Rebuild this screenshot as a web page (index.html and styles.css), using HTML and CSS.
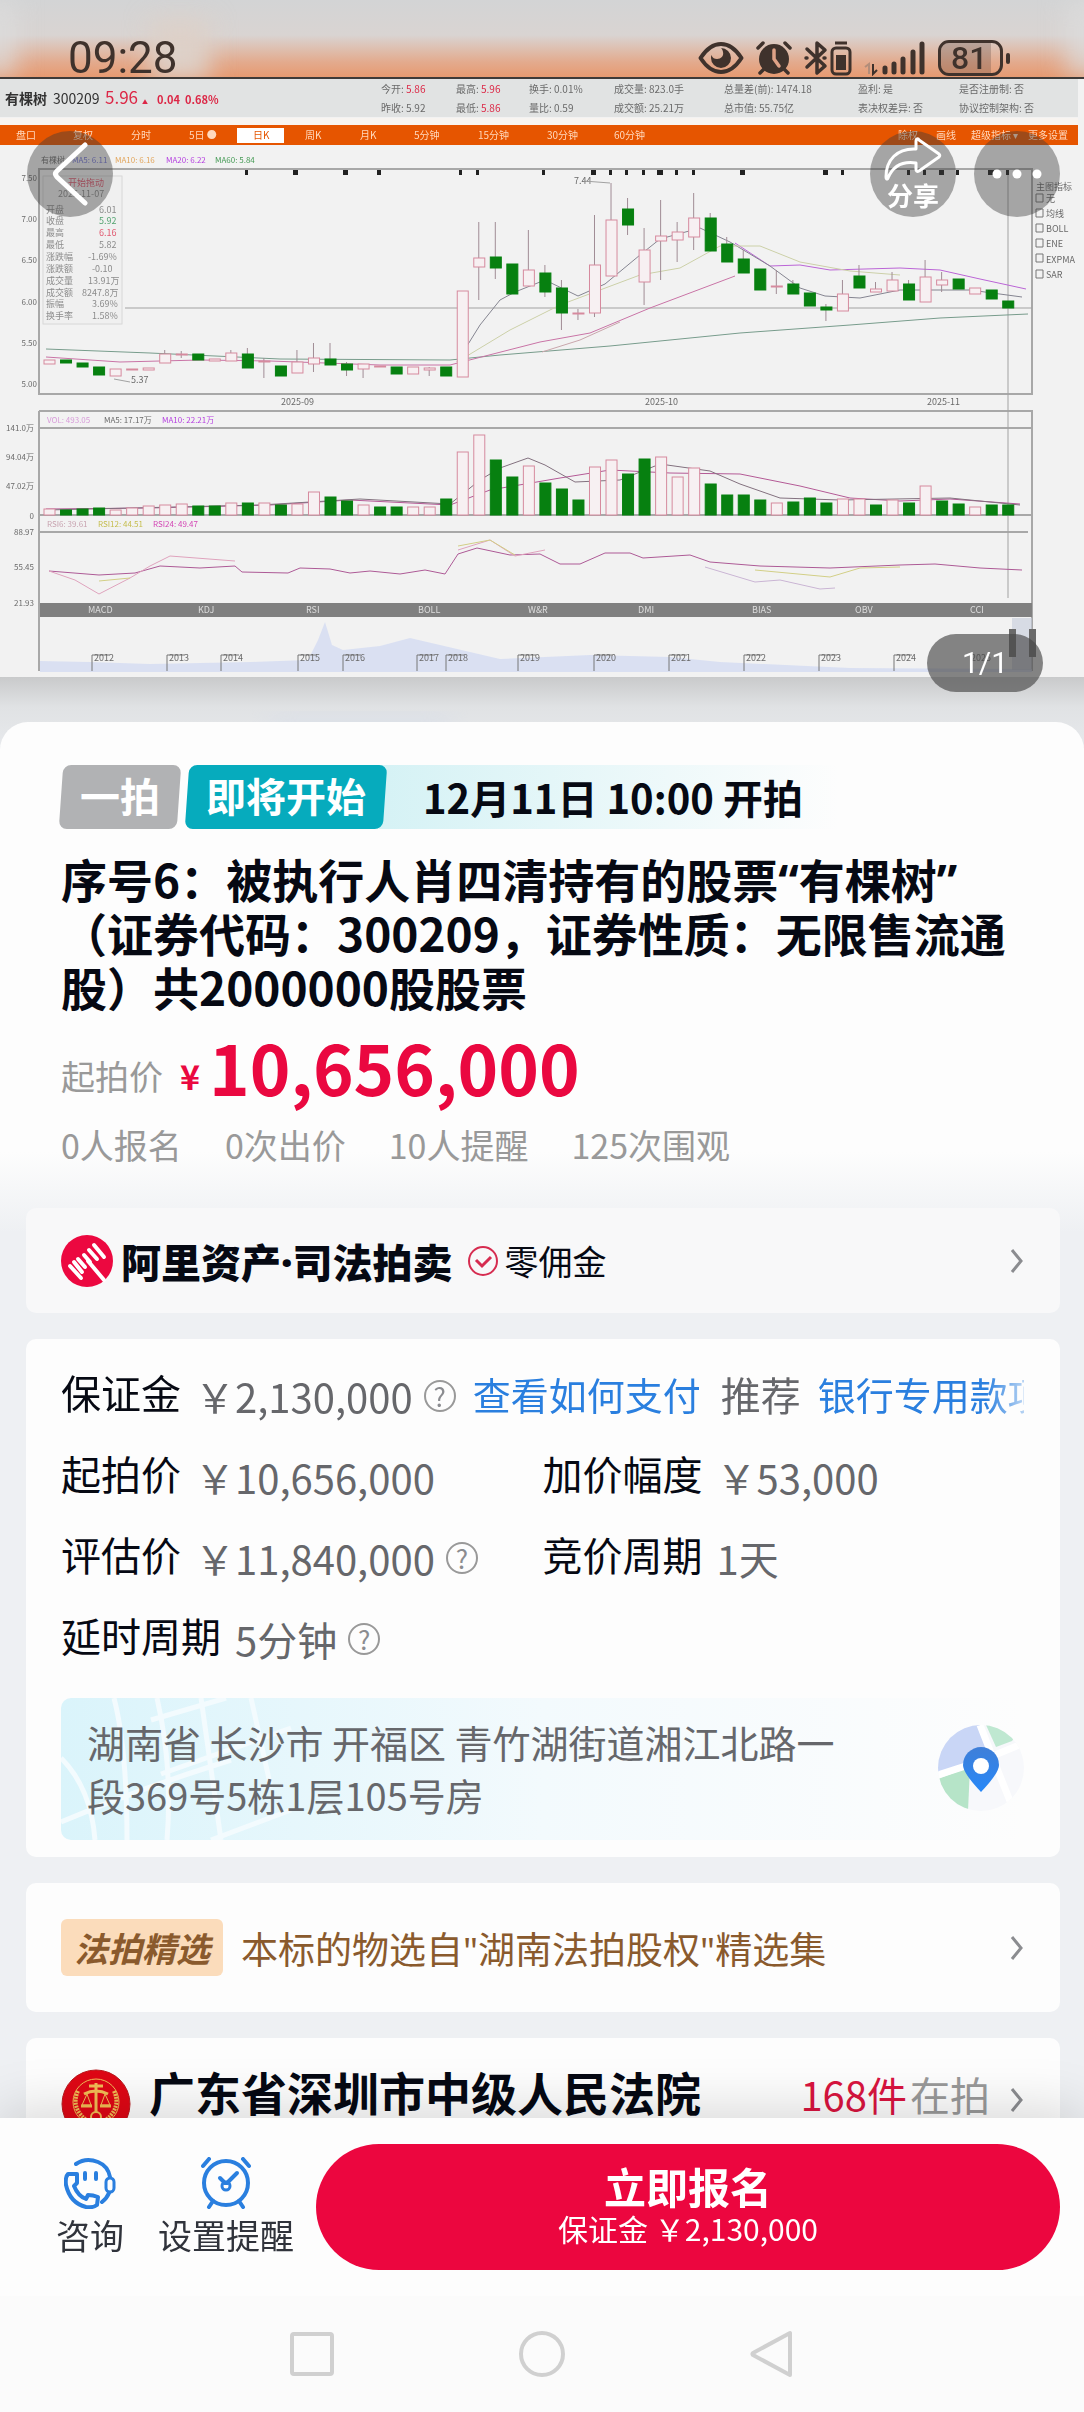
FILE: index.html
```html
<!DOCTYPE html>
<html lang="zh-CN">
<head>
    <meta charset="UTF-8">
    <meta name="viewport" content="width=device-width, initial-scale=1">
    <title>阿里资产·司法拍卖</title>
    <link rel="stylesheet" href="styles.css">
</head>
<body>

<main class="content">
    <section class="hero">
        <svg class="chart" viewBox="0 0 1084 752" role="img" aria-label="有棵树 300209">
            <defs>
                <linearGradient id="skyTop" x1="0" y1="0" x2="0" y2="1">
                    <stop offset="0" stop-color="#d3d4d5"/>
                    <stop offset="0.45" stop-color="#d9d4d2"/>
                    <stop offset="0.8" stop-color="#e3aa8d"/>
                    <stop offset="1" stop-color="#e7996f"/>
                </linearGradient>
                <linearGradient id="skyBottom" x1="0" y1="0" x2="0" y2="1">
                    <stop offset="0" stop-color="#c9cacb"/>
                    <stop offset="0.4" stop-color="#e0e2e4"/>
                    <stop offset="1" stop-color="#e8eaed"/>
                </linearGradient>
                <filter id="soft"><feGaussianBlur stdDeviation="0.7"/></filter>
                <filter id="haze"><feGaussianBlur stdDeviation="12"/></filter>
            </defs>
            <rect width="1084" height="78" fill="url(#skyTop)"/>
            <g filter="url(#haze)">
                <rect x="150" y="20" width="60" height="60" fill="#ddd0c8"/>
                <rect x="-20" y="0" width="36" height="76" fill="#dcdcdc" opacity="0.8"/>
                <rect x="1066" y="0" width="40" height="76" fill="#dcdcdc" opacity="0.8"/>
            </g>
            <rect y="677" width="1084" height="75" fill="url(#skyBottom)"/>
            <rect x="270" y="715" width="180" height="40" fill="#d5dbe8" opacity="0.5" filter="url(#haze)"/>

            <rect y="78" width="1084" height="599" fill="#f2f2f2"/>
            <rect y="79" width="1078" height="38" fill="#e1e3e3"/>
            <rect y="77" width="1084" height="2" fill="#3e3a38"/>
            <rect y="118" width="1078" height="7" fill="#f8f4f0"/>
            <rect y="125" width="1078" height="20" fill="#e65500"/>
            <rect x="237" y="128" width="47" height="15" fill="#fff"/>

            <g class="chart-text" filter="url(#soft)">
                <g class="quote-head">
                    <text x="5" y="104" class="bold">有棵树</text>
                    <text x="53" y="104">300209</text>
                    <text x="105" y="104" class="last up">5.96</text>
                    <text x="142" y="104" class="up tiny">▲</text>
                    <text x="157" y="104" class="change up">0.04</text>
                    <text x="185" y="104" class="change up">0.68%</text>
                </g>
                <text x="381" y="93">今开: <tspan class="up">5.86</tspan></text>
                <text x="381" y="112">昨收: 5.92</text>
                <text x="456" y="93">最高: <tspan class="up">5.96</tspan></text>
                <text x="456" y="112">最低: <tspan class="up">5.86</tspan></text>
                <text x="529" y="93">换手: 0.01%</text>
                <text x="529" y="112">量比: 0.59</text>
                <text x="614" y="93">成交量: 823.0手</text>
                <text x="614" y="112">成交额: 25.21万</text>
                <text x="724" y="93">总量差(前): 1474.18</text>
                <text x="724" y="112">总市值: 55.75亿</text>
                <text x="858" y="93">盈利: 是</text>
                <text x="858" y="112">表决权差异: 否</text>
                <text x="959" y="93">是否注册制: 否</text>
                <text x="959" y="112">协议控制架构: 否</text>

                <g class="tabs">
                    <text x="16" y="139">盘口</text>
                    <text x="73" y="139">复权</text>
                    <text x="131" y="139">分时</text>
                    <text x="189" y="139">5日 ●</text>
                    <text x="253" y="139" class="orange">日K</text>
                    <text x="305" y="139">周K</text>
                    <text x="360" y="139">月K</text>
                    <text x="414" y="139">5分钟</text>
                    <text x="478" y="139">15分钟</text>
                    <text x="547" y="139">30分钟</text>
                    <text x="614" y="139">60分钟</text>
                    <text x="898" y="139">除权</text>
                    <text x="936" y="139">画线</text>
                    <text x="971" y="139">超级指标 ▾</text>
                    <text x="1028" y="139">更多设置</text>
                </g>

                <g class="legend">
                    <text x="41" y="163">有棵树</text>
                    <text x="72" y="163" fill="#7779d8">MA5: 6.11</text>
                    <text x="115" y="163" fill="#e2a55c">MA10: 6.16</text>
                    <text x="166" y="163" fill="#b53fe0">MA20: 6.22</text>
                    <text x="215" y="163" fill="#459a55">MA60: 5.84</text>
                    <text x="47" y="423" fill="#d79bd9">VOL: 493.05</text>
                    <text x="104" y="423">MA5: 17.17万</text>
                    <text x="162" y="423" fill="#b53fe0">MA10: 22.21万</text>
                    <text x="47" y="527" fill="#c8a3b0">RSI6: 39.61</text>
                    <text x="98" y="527" fill="#c5bd4c">RSI12: 44.51</text>
                    <text x="153" y="527" fill="#d346b5">RSI24: 49.47</text>
                </g>

                <g class="axis">
                    <text x="37" y="181">7.50</text>
                    <text x="37" y="222">7.00</text>
                    <text x="37" y="263">6.50</text>
                    <text x="37" y="305">6.00</text>
                    <text x="37" y="346">5.50</text>
                    <text x="37" y="387">5.00</text>
                    <text x="34" y="431">141.0万</text>
                    <text x="34" y="460">94.04万</text>
                    <text x="34" y="489">47.02万</text>
                    <text x="34" y="519">0</text>
                    <text x="34" y="535">88.97</text>
                    <text x="34" y="570">55.45</text>
                    <text x="34" y="606">21.93</text>
                </g>
                <text x="574" y="184" class="small">7.44</text>
                <text x="131" y="383" class="small">5.37</text>
                <text x="281" y="405" class="small">2025-09</text>
                <text x="645" y="405" class="small">2025-10</text>
                <text x="927" y="405" class="small">2025-11</text>
            </g>

            <g class="frame">
                <path d="M39 169H1032V394H39Z"/>
                <path d="M39 411H1032V671M39 411V671M39 428H1032M39 515H1032M39 532H1028"/>
                <path d="M125 308H1032" class="thin"/>
                <path d="M1008 170V598" class="thin"/>
                <path d="M584 181L610 183" class="thin"/>
                <path d="M114 379L130 382" class="thin"/>
            </g>
            <path class="marks" d="M245 170h3v5h-3zM293 170h5v5h-5zM343 170h5v5h-5zM377 170h4v5h-4zM459 170h3v5h-3zM476 170h3v5h-3zM542 170h3v5h-3zM591 170h5v5h-5zM609 170h3v5h-3zM625 170h3v5h-3zM642 170h3v5h-3zM657 170h6v5h-6zM675 170h3v5h-3zM692 170h3v5h-3zM740 170h5v5h-5zM823 170h5v5h-5zM841 170h3v5h-3zM907 170h3v5h-3zM923 170h3v5h-3zM939 170h5v5h-5zM956 170h3v5h-3zM988 170h6v5h-6zM1006 170h3v5h-3z"/>

            <!-- moving averages -->
            <g class="lines" filter="url(#soft)">
                <path stroke="#789c8c" d="M46 349L150 353L280 359L450 360L500 355L610 346L740 333L850 325L940 318L1028 314"/>
                <path stroke="#c974a6" d="M46 357L120 362L200 360L270 361L380 365L450 365L540 342L590 333L650 308L735 276"/>
                <path stroke="#bb65d6" d="M735 243L770 266L800 265L830 270L900 268L940 270L980 279L1026 289"/>
                <path stroke="#858591" d="M457 362L480 325L500 300L515 292L545 280L578 296L605 284L640 255L660 239L700 228L730 242L770 266L800 288L825 296L860 298L900 290L970 290L1022 297"/>
                <path stroke="#ccd0a8" d="M457 362L510 330L560 305L600 290L640 275L680 268L720 246L760 246L800 262L850 271L900 275"/>
                <path stroke="#c9a6ac" d="M542 352L580 340L620 322"/>
                <path stroke="#b45a96" d="M46 509L150 508L270 505L350 500L450 505L490 490L560 478L610 470L670 473L740 474L800 486L850 498L900 501L950 499L1020 504"/>
                <path stroke="#83717f" d="M46 510L260 505L360 499L450 504L480 480L500 468L528 458L545 465L575 482L620 480L660 464L710 471L740 484L780 498L840 500L950 498L1020 505"/>
                <path stroke="#ad5a96" d="M49 571L99 575L135 573L160 566L200 568L235 566L242 572L288 573L300 568L330 569L350 573L370 571L400 574L425 570L445 574L458 554L477 548L510 555L540 554L560 564L580 564L605 553L630 553L643 558L690 555L710 562L760 566L830 568L900 565L935 564L980 568L1022 570"/>
                <path stroke="#dfa3bd" d="M49 571L75 580L99 594L130 578L150 566L170 556L235 561M458 550L490 540L515 556L545 550"/>
                <path stroke="#d2cf86" d="M99 581L130 578M458 546L490 540L515 555M755 570L830 577L860 568L900 567"/>
                <path stroke="#cab5d4" d="M705 567L755 582L780 580L820 589L835 588"/>
            </g>
            <g id="candles"></g>
            <g id="volumes"></g>

            <rect x="40" y="603" width="992" height="14" fill="#808080"/>
            <g filter="url(#soft)">
                <path d="M40 672V661L90 662L150 664L250 662L308 660L318 640L325 622L332 645L343 650L380 646L410 638L440 645L470 652L500 659L590 655L670 657L720 662L850 668L1032 669V672Z" fill="#d4dcf3" opacity="0.8"/>
                <path d="M92 671V655H110M167 671V655H185M221 671V655H239M298 671V655H316M343 671V655H361M417 671V655H435M446 671V655H464M518 671V655H536M594 671V655H612M669 671V655H687M744 671V655H762M819 671V655H837M894 671V655H912" class="flags"/>
                <g class="chart-text small">
                    <text x="94" y="661">2012</text>
                    <text x="169" y="661">2013</text>
                    <text x="223" y="661">2014</text>
                    <text x="300" y="661">2015</text>
                    <text x="345" y="661">2016</text>
                    <text x="419" y="661">2017</text>
                    <text x="448" y="661">2018</text>
                    <text x="520" y="661">2019</text>
                    <text x="596" y="661">2020</text>
                    <text x="671" y="661">2021</text>
                    <text x="746" y="661">2022</text>
                    <text x="821" y="661">2023</text>
                    <text x="896" y="661">2024</text>
                    <text x="971" y="661">2025</text>
                    <g fill="#ddd">
                        <text x="88" y="613">MACD</text>
                        <text x="198" y="613">KDJ</text>
                        <text x="306" y="613">RSI</text>
                        <text x="418" y="613">BOLL</text>
                        <text x="528" y="613">W&amp;R</text>
                        <text x="638" y="613">DMI</text>
                        <text x="752" y="613">BIAS</text>
                        <text x="855" y="613">OBV</text>
                        <text x="970" y="613">CCI</text>
                    </g>
                </g>
                <rect x="1012" y="618" width="20" height="52" fill="#c5cbdb" opacity="0.6"/>
                <rect x="1009" y="629" width="7" height="28" fill="#6b6b6b"/>
                <rect x="1029" y="629" width="7" height="28" fill="#6b6b6b"/>
            </g>

            <!-- quote tooltip -->
            <g filter="url(#soft)">
                <rect x="43" y="176" width="79" height="148" fill="#f0f0f0" stroke="#d8d8d8"/>
                <g class="chart-text small" opacity="0.75">
                    <text x="68" y="186" class="up">开始拖动</text>
                    <text x="58" y="197">2025-11-07</text>
                    <text x="46" y="213">开盘</text><text x="99" y="213">6.01</text>
                    <text x="46" y="224">收盘</text><text x="99" y="224" fill="#1f8a47">5.92</text>
                    <text x="46" y="236">最高</text><text x="99" y="236" class="up">6.16</text>
                    <text x="46" y="248">最低</text><text x="99" y="248">5.82</text>
                    <text x="46" y="260">涨跌幅</text><text x="88" y="260">-1.69%</text>
                    <text x="46" y="272">涨跌额</text><text x="92" y="272">-0.10</text>
                    <text x="46" y="284">成交量</text><text x="88" y="284">13.91万</text>
                    <text x="46" y="296">成交额</text><text x="82" y="296">8247.8万</text>
                    <text x="46" y="307">振幅</text><text x="92" y="307">3.69%</text>
                    <text x="46" y="319">换手率</text><text x="92" y="319">1.58%</text>
                </g>
            </g>

            <g filter="url(#soft)" class="chart-text small">
                <text x="1036" y="190">主图指标</text>
                <text x="1046" y="202">无</text>
                <text x="1046" y="217">均线</text>
                <text x="1046" y="232">BOLL</text>
                <text x="1046" y="247">ENE</text>
                <text x="1046" y="263">EXPMA</text>
                <text x="1046" y="278">SAR</text>
                <path class="boxes" d="M1036 194h7v8h-7zM1036 209h7v8h-7zM1036 224h7v8h-7zM1036 239h7v8h-7zM1036 254h7v8h-7zM1036 270h7v8h-7z"/>
            </g>
        </svg>

        <div class="hero-overlay">
            <div class="status">
                <span class="clock">09:28</span>
                <div class="status-icons">
                    <svg class="eye" width="46" height="32" viewBox="0 0 46 32">
                        <path d="M2.500 16C9 6 16 2 23 2s14 4 20.500 14C37 26 30 30 23 30S9 26 2.500 16Z" fill="none" stroke="#3f322c" stroke-width="4" stroke-linejoin="round"/>
                        <path d="M23 6a10 10 0 1 1-10 10c0-1 .2-2 .5-3 1 3 3 4 5.500 4 4 0 7-3 6-7-.3-1.600-1-3-2-4Z" fill="#3f322c"/>
                    </svg>
                    <svg width="36" height="34" viewBox="0 0 36 34">
                        <circle cx="18" cy="18" r="15" fill="#3f322c"/>
                        <path d="M2 7L7 2M34 7L29 2M8 28L4 32M28 28l4 4" stroke="#3f322c" stroke-width="3.500" stroke-linecap="round"/>
                        <path d="M18 9v9l5 7" fill="none" stroke="#dfa287" stroke-width="3.500" stroke-linecap="round"/>
                    </svg>
                    <svg width="48" height="36" viewBox="0 0 48 36">
                        <path d="M3 9l18 17-8 7V3l8 7L3 27M2 18h1M20 18h1" fill="none" stroke="#3f322c" stroke-width="3.500" stroke-linecap="round" stroke-linejoin="round"/>
                        <rect x="28" y="8" width="18" height="26" rx="4" fill="none" stroke="#3f322c" stroke-width="3"/>
                        <rect x="32" y="15" width="10" height="15" fill="#3f322c"/>
                        <path d="M31 3h12" stroke="#3f322c" stroke-width="3"/>
                    </svg>
                    <svg width="62" height="36" viewBox="0 0 62 36">
                        <g stroke="#3f322c" stroke-width="5" stroke-linecap="round">
                            <path d="M21 28v4M30 24v8M39 19v13M49 12v20M58 4v28"/>
                        </g>
                        <path d="M1 27l4-3v10" fill="none" stroke="#b28d7a" stroke-width="2"/>
                        <path d="M9 24v10l4-4" fill="none" stroke="#3f322c" stroke-width="2"/>
                    </svg>
                    <span class="battery"><span class="battery-level">81</span></span>
                </div>
            </div>
            <div class="toolbar">
                <button class="round-btn" aria-label="返回">
                    <svg width="36" height="64" viewBox="0 0 36 64"><path d="M33 3L5 29q-3 3 0 6l28 26" fill="none" stroke="#fff" stroke-width="5" stroke-linecap="round"/></svg>
                </button>
                <button class="round-btn share">
                    <svg width="58" height="44" viewBox="0 0 58 44"><path d="M32 4c0-2 2-3 3-1l20 14c1 1 1 2 0 3L35 34c-2 1-3 0-3-2v-6C19 24 9 29 4 41c-1 2-2 1-2-1C2 23 13 11 32 12Z" fill="none" stroke="#fff" stroke-width="3" stroke-linejoin="round"/></svg>
                    <span>分享</span>
                </button>
                <button class="round-btn" aria-label="更多">
                    <svg width="50" height="10" viewBox="0 0 50 10" fill="#fff"><circle cx="5" cy="5" r="4.500"/><circle cx="25" cy="5" r="4.500"/><circle cx="45" cy="5" r="4.500"/></svg>
                </button>
            </div>
            <span class="counter">1/1</span>
        </div>
    </section>

    <div class="sheet">
        <section class="summary">
            <div class="schedule">
                <span class="tag tag-round">一拍</span>
                <span class="tag tag-soon">即将开始</span>
                <span class="start-time">12月11日 10:00 开拍</span>
            </div>
            <h1>序号6：被执行人肖四清持有的股票<span class="latin">“</span>有棵树<span class="latin">”</span>（证券代码：300209，证券性质：无限售流通股）共2000000股股票</h1>
            <div class="price">
                <span class="price-label">起拍价</span>
                <span class="currency">¥</span>
                <strong>10,656,000</strong>
            </div>
            <div class="stats">
                <span>0人报名</span>
                <span>0次出价</span>
                <span>10人提醒</span>
                <span>125次围观</span>
            </div>
        </section>

        <a href="#" class="panel brand">
            <svg width="52" height="52" viewBox="0 0 52 52">
                <circle cx="26" cy="26" r="26" fill="#ec0840"/>
                <g stroke="#fff" stroke-linecap="round" stroke-width="4">
                    <path d="M33 10l10 12M28 15l8 9M23 20l6 7M17 24l7 8M13 27l8 10M9 31l11 12"/>
                    <path d="M27 26L43 45"/>
                </g>
            </svg>
            <span class="brand-name">阿里资产<span class="latin">·</span>司法拍卖</span>
            <svg width="32" height="32" viewBox="0 0 32 32" fill="none" stroke="#d62c50" stroke-width="2"><circle cx="16" cy="16" r="14"/><path d="M9 15l6 6 9-9" stroke-width="3"/></svg>
            <span class="commission">零佣金</span>
            <svg class="chevron" width="14" height="26" viewBox="0 0 14 26"><path d="M2 2l9 11-9 11"/></svg>
        </a>

        <section class="panel details">
            <div class="row deposit">
                <span class="label">保证金</span>
                <span class="value">￥2,130,000</span>
                <button class="help" aria-label="保证金说明">?</button>
                <a href="#" class="link">查看如何支付</a>
                <span class="recommend">推荐</span>
                <a href="#" class="link">银行专用款项</a>
            </div>
            <div class="row">
                <div class="cell"><span class="label">起拍价</span><span class="value">￥10,656,000</span></div>
                <div class="cell"><span class="label">加价幅度</span><span class="value">￥53,000</span></div>
            </div>
            <div class="row">
                <div class="cell"><span class="label">评估价</span><span class="value">￥11,840,000</span><button class="help" aria-label="评估价说明">?</button></div>
                <div class="cell"><span class="label">竞价周期</span><span class="value">1天</span></div>
            </div>
            <div class="row">
                <div class="cell"><span class="label">延时周期</span><span class="value">5分钟</span><button class="help" aria-label="延时周期说明">?</button></div>
            </div>
            <a href="#" class="address">
                <svg class="streets" viewBox="0 0 240 142" preserveAspectRatio="xMinYMid slice" fill="none" stroke="#f3fbfe" stroke-width="5">
                    <path d="M53 0Q66 50 66 142M96 0Q112 70 106 142M140 0L160 142M0 60Q30 90 34 142M90 22L165 0M100 76L230 30M0 124Q80 90 170 62M150 142L230 112M190 0L210 90"/>
                </svg>
                <span class="address-text">湖南省 长沙市 开福区 青竹湖街道湘江北路一段369号5栋1层105号房</span>
                <svg class="map-pin" width="86" height="86" viewBox="0 0 86 86">
                    <defs>
                        <clipPath id="mapClip"><circle cx="43" cy="43" r="43"/></clipPath>
                        <linearGradient id="pinFill" x1="0" y1="0" x2="0" y2="1"><stop offset="0" stop-color="#3f7fd8"/><stop offset="1" stop-color="#2788f8"/></linearGradient>
                    </defs>
                    <g clip-path="url(#mapClip)">
                        <rect width="86" height="86" fill="#f7f8fb"/>
                        <path d="M0 0H42L52 32L0 47Z" fill="#c9d6f6"/>
                        <path d="M48 0H86L74 16L58 22Z" fill="#bfe8d1"/>
                        <path d="M0 54L32 42L30 86H0Z" fill="#b6e4c8"/>
                        <path d="M42 0L60 46L76 86M0 50L40 37L86 18" fill="none" stroke="#fff" stroke-width="7"/>
                    </g>
                    <path d="M43 67Q25 48 25 40a18 18 0 0 1 36 0Q61 48 43 67Z" fill="url(#pinFill)"/>
                    <circle cx="43" cy="41" r="8" fill="#fff"/>
                </svg>
            </a>
        </section>

        <a href="#" class="panel selection">
            <span class="selection-tag">法拍精选</span>
            <span class="selection-text">本标的物选自<span class="latin">"</span>湖南法拍股权<span class="latin">"</span>精选集</span>
            <svg class="chevron" width="14" height="26" viewBox="0 0 14 26"><path d="M2 2l9 11-9 11"/></svg>
        </a>

        <a href="#" class="panel court">
            <svg class="emblem" width="70" height="70" viewBox="0 0 70 70">
                <circle cx="35" cy="35" r="34" fill="#df0715" stroke="#b91a1e" stroke-width="1"/>
                <g fill="none" stroke="#f2bc55" stroke-width="2">
                    <circle cx="35" cy="33" r="23" stroke-width="1"/>
                    <path d="M35 14v29M28 17h14M23 25q12-6 24 0" stroke-width="3"/>
                    <path d="M26 25l-5 11h9ZM44 25l-4 11h9Z" stroke-width="1"/>
                    <path d="M20 37h11M39 37h11" stroke-width="3"/>
                    <path d="M17 22Q9 40 28 53M53 22Q61 40 42 53" stroke-width="4" stroke-dasharray="2 1"/>
                    <circle cx="35" cy="48" r="5"/>
                </g>
            </svg>
            <h2>广东省深圳市中级人民法院</h2>
            <span class="court-count"><em>168件</em>在拍</span>
            <svg class="chevron" width="14" height="26" viewBox="0 0 14 26"><path d="M2 2l9 11-9 11"/></svg>
        </a>
    </div>
</main>

<footer class="action-bar">
    <button class="action">
        <svg width="52" height="52" viewBox="0 0 52 52" fill="none" stroke="#2a7fdf" stroke-width="4" stroke-linecap="round" stroke-linejoin="round">
            <path d="M12 7Q22 0 34 5q10 4 12 15M38 45q5-4 7-9"/>
            <rect x="42" y="21" width="8" height="14" rx="4" stroke-width="3"/>
            <path d="M11 17H4Q1 20 2 28q4 18 20 22 7 1 11-2l1-8q-5-2-10-2l-2 4Q14 39 10 29l3-3V17Z"/>
            <path d="M21 16v6M32 16v6"/>
        </svg>
        <span>咨询</span>
    </button>
    <button class="action">
        <svg width="52" height="52" viewBox="0 0 52 52" fill="none" stroke="#2a7fdf" stroke-width="4" stroke-linecap="round" stroke-linejoin="round">
            <circle cx="26" cy="26" r="22"/>
            <path d="M3 9l6-7M49 9l-6-7M13 44l-4 6M39 44l4 6"/>
            <path d="M20 21l5 5M27 26l10-10"/>
            <circle cx="26" cy="29" r="4" stroke-width="3"/>
        </svg>
        <span>设置提醒</span>
    </button>
    <button class="signup">
        <strong>立即报名</strong>
        <span>保证金 ￥2,130,000</span>
    </button>
</footer>

<nav class="system-nav">
    <button aria-label="最近任务"><svg width="48" height="48" viewBox="0 0 48 48"><rect x="4" y="4" width="40" height="40" rx="2"/></svg></button>
    <button aria-label="主屏幕"><svg width="48" height="48" viewBox="0 0 48 48"><circle cx="24" cy="24" r="21"/></svg></button>
    <button aria-label="后退"><svg width="48" height="48" viewBox="0 0 48 48"><path d="M42 3v42L5 25q-1-1 0-2Z"/></svg></button>
</nav>

<script src="chart.js"></script>
</body>
</html>
```
FILE: styles.css
```css
* {
    box-sizing: border-box;
}
body {
    margin: 0;
    height: 100vh;
    display: flex;
    flex-direction: column;
    font-family: "Noto Sans CJK SC", "Noto Sans", sans-serif;
    background: #eef0f3;
    color: #060913;
}
a {
    color: inherit;
    text-decoration: none;
}
button {
    margin: 0;
    padding: 0;
    border: 0;
    background: none;
    font-family: inherit;
    color: inherit;
    cursor: pointer;
}
svg {
    flex: none;
}
.latin {
    font-family: "Noto Sans", sans-serif;
    line-height: 1;
}
.content {
    flex: 1;
    min-height: 0;
    overflow-y: auto;
    scrollbar-width: none;
}

/* hero chart */
.hero {
    position: relative;
}
.chart {
    display: block;
    width: 100%;
}
.chart-text {
    font-size: 10px;
    fill: #6a6a6a;
}
.chart-text .up {
    fill: #dc2846;
}
.chart-text .bold {
    font-weight: bold;
}
.chart-text .small, .small {
    font-size: 9px;
}
.legend {
    font-size: 8px;
}
.quote-head {
    font-size: 14px;
    fill: #333;
}
.quote-head .last {
    font-size: 17px;
}
.quote-head .change {
    font-size: 11px;
    font-weight: bold;
}
.quote-head .tiny {
    font-size: 6px;
}
.tabs {
    fill: #ffd9bd;
}
.tabs .orange {
    fill: #e65500;
}
.axis {
    font-size: 8px;
    text-anchor: end;
}
.frame, .lines, .flags, .boxes {
    fill: none;
}
.frame {
    stroke: #a8a8a8;
    stroke-width: 2;
}
.frame .thin {
    stroke: #a2a2a2;
    stroke-width: 1;
}
.marks {
    fill: #222;
}
.lines {
    stroke-width: 1;
}
.flags {
    stroke: #777;
}
.boxes {
    stroke: #777;
}
.down-bar {
    fill: #078010;
    stroke: #078010;
}
.up-bar {
    fill: #f7f0f2;
    stroke: #d68a9e;
}
.wick {
    stroke: #a08c95;
}

.hero-overlay {
    position: absolute;
    inset: 0;
    display: flex;
    flex-direction: column;
}
.status {
    display: flex;
    justify-content: space-between;
    align-items: center;
    padding: 36px 74px 0 68px;
    color: #3f322c;
}
.clock {
    font-family: Roboto, sans-serif;
    font-size: 44px;
    line-height: 44px;
}
.status-icons {
    display: flex;
    align-items: center;
    gap: 12px;
}
.battery {
    position: relative;
    width: 65px;
    height: 36px;
    border: 3px solid #3f322c;
    border-radius: 11px;
    font-family: Roboto, sans-serif;
    font-size: 32px;
    font-weight: 500;
    line-height: 30px;
    margin-right: 7px;
}
.battery::after {
    content: "";
    position: absolute;
    right: -10px;
    top: 10px;
    width: 4px;
    height: 11px;
    border-radius: 2px;
    background: #3f322c;
}
.battery-level {
    display: block;
    width: 85%;
    padding-left: 10px;
    border-radius: 8px 0 0 8px;
    background: rgba(90, 70, 60, 0.28);
}
.toolbar {
    display: flex;
    gap: 18px;
    padding: 51px 24px 0 27px;
}
.round-btn {
    display: flex;
    flex-direction: column;
    align-items: center;
    justify-content: center;
    width: 86px;
    height: 86px;
    border-radius: 50%;
    background: rgba(60, 60, 60, 0.42);
    color: #fff;
}
.share {
    margin-left: auto;
    padding-bottom: 3px;
    font-size: 26px;
    font-weight: bold;
    line-height: 28px;
}
.counter {
    align-self: flex-end;
    margin: auto 41px 60px 0;
    width: 116px;
    border-radius: 29px;
    background: rgba(70, 70, 70, 0.65);
    color: #fff;
    font-family: Roboto, sans-serif;
    font-size: 30px;
    line-height: 58px;
    text-align: center;
}

/* sheet */
.sheet {
    position: relative;
    margin-top: -30px;
    padding: 0 24px 26px 26px;
    display: flex;
    flex-direction: column;
    gap: 26px;
    border-radius: 28px 28px 0 0;
    background: linear-gradient(#fdfdfd 0, #fdfdfd 430px, #eef0f3 510px);
}
.summary {
    padding: 43px 35px 12px;
}
.schedule {
    display: flex;
    gap: 8px;
    height: 64px;
    line-height: 60px;
    font-size: 40px;
    font-weight: bold;
}
.tag {
    position: relative;
    z-index: 1;
    padding: 0 19px;
    color: #fff;
}
.tag::before {
    content: "";
    position: absolute;
    inset: 0;
    z-index: -1;
    border-radius: 8px;
    transform: skewX(-4deg);
    background: #b1b2b4;
}
.tag-soon::before {
    background: #06abbd;
}
.start-time {
    margin-left: -14px;
    padding: 2px 0 0 44px;
    flex: 0 1 460px;
    background: linear-gradient(90deg, #d5f2f5, #fdfdfd);
    white-space: nowrap;
}
h1, h2 {
    margin: 0;
    font-size: 46px;
    font-weight: bold;
    line-height: 54px;
}
h1 {
    margin-top: 22px;
}
.price {
    display: flex;
    align-items: center;
    line-height: 78px;
    margin-top: 14px;
    color: #ea0840;
}
.price-label, .currency {
    margin-top: 20px;
    font-size: 34px;
    line-height: 50px;
}
.price-label {
    color: #999;
}
.currency {
    margin-left: 17px;
    font-weight: bold;
}
.price strong {
    margin-left: 9px;
    font-size: 69px;
}
.stats {
    display: flex;
    gap: 43px;
    margin-top: 15px;
    font-size: 34px;
    line-height: 50px;
    color: #999;
}
.panel {
    padding: 0 36px 0 35px;
    border-radius: 10px;
    background: #fdfdfd;
}
.chevron {
    margin-left: auto;
    fill: none;
    stroke: #8b8c90;
    stroke-width: 3;
}
.brand {
    display: flex;
    align-items: center;
    height: 105px;
    background: #f8f8f9;
}
.brand-name {
    margin: 0 14px 0 8px;
    font-size: 40px;
    font-weight: 900;
}
.commission {
    margin-left: 6px;
    font-size: 34px;
}

/* details */
.details {
    display: flex;
    flex-direction: column;
    gap: 21px;
    padding-top: 25px;
    padding-bottom: 17px;
}
.row {
    display: grid;
    grid-template-columns: 1fr 1fr;
    font-size: 40px;
    line-height: 56px;
    white-space: nowrap;
}
.row.deposit, .cell {
    display: flex;
    align-items: center;
}
.row.deposit {
    overflow-x: clip;
    -webkit-mask-image: linear-gradient(90deg, #000 96%, transparent 102%);
    mask-image: linear-gradient(90deg, #000 96%, transparent 102%);
}
.label {
    padding-bottom: 4px;
}
.value {
    margin-left: 14px;
    padding-top: 4px;
    color: #66676b;
}
.help {
    flex: none;
    width: 32px;
    height: 32px;
    margin: 4px 0 0 11px;
    border: 2px solid #999;
    border-radius: 50%;
    font-size: 26px;
    line-height: 26px;
    color: #8b8c90;
}
.link {
    margin-left: 17px;
    font-size: 38px;
    color: #2a7fdf;
}
.recommend {
    margin-left: 20px;
    color: #66676b;
}
.address {
    position: relative;
    display: flex;
    align-items: center;
    justify-content: space-between;
    margin-top: 10px;
    padding: 17px 0 19px 26px;
    border-radius: 10px;
    overflow: hidden;
    background: linear-gradient(90deg, #daf4fb, #f3fafd 50%, #fdfdfd);
    font-size: 38px;
    line-height: 53px;
    color: #66676b;
}
.streets {
    position: absolute;
    left: 0;
    top: 0;
    height: 100%;
}
.address-text {
    position: relative;
    max-width: 765px;
}

.selection {
    display: flex;
    align-items: center;
    height: 129px;
    color: #8a5a2d;
}
.selection-tag {
    padding: 0 13px;
    border-radius: 6px;
    background: #fbdcbb;
    font-size: 34px;
    font-weight: bold;
    font-style: italic;
    line-height: 57px;
}
.selection-text {
    margin-left: 18px;
    font-size: 37px;
}
.court {
    display: flex;
    align-items: flex-start;
    padding-top: 26px;
    padding-bottom: 60px;
}
.emblem {
    margin-top: 5px;
}
.court h2 {
    margin-left: 18px;
}
.court-count {
    margin-left: auto;
    margin-right: 20px;
    font-size: 40px;
    line-height: 60px;
    color: #999;
}
.court-count em {
    margin-right: 3px;
    font-style: normal;
    color: #d9143f;
}
.court .chevron {
    margin-left: 0;
    margin-top: 23px;
}

/* bottom bar */
.action-bar {
    position: relative;
    display: flex;
    align-items: center;
    gap: 34px;
    padding: 26px 24px 26px 56px;
    background: #fdfdfd;
    box-shadow: 0 -8px 50px rgba(0, 0, 0, 0.15);
}
.action {
    display: flex;
    flex-direction: column;
    align-items: center;
    gap: 4px;
    font-size: 34px;
    line-height: 44px;
    color: #30333b;
}
.signup {
    flex: 1;
    display: flex;
    flex-direction: column;
    align-items: center;
    margin-left: -12px;
    padding: 18px 0 24px;
    border-radius: 64px;
    background: #ec063f;
    color: #fff;
    font-size: 30px;
    line-height: 36px;
}
.signup strong {
    font-size: 42px;
    line-height: 48px;
}
.system-nav {
    position: relative;
    display: flex;
    justify-content: center;
    gap: 182px;
    padding: 34px 0;
    background: #fbfbfb;
}
.system-nav svg {
    display: block;
    fill: none;
    stroke: #d0d0d0;
    stroke-width: 4;
    stroke-linejoin: round;
}
```
FILE: chart.js
```js
// g = down, r = up: [type, body top, body bottom, high, low]
const candles = [
    ['r', 360, 364], ['g', 360, 363], ['g', 363, 367], ['g', 367, 375], ['r', 369, 376],
    ['r', 369, 370], ['r', 368, 370], ['r', 354, 363, 350], ['r', 354, 355, 351, 358], ['g', 354, 360],
    ['r', 359, 361], ['r', 353, 361, 350], ['g', 354, 368, 348], ['r', 361, 362, 358, 378], ['g', 366, 376],
    ['r', 362, 373, 350], ['r', 358, 364, 343, 372], ['g', 359, 365, 343], ['g', 364, 370, 362, 376], ['r', 364, 369, 364, 378],
    ['r', 366, 367], ['g', 367, 374], ['r', 367, 374], ['r', 368, 370, 367, 376], ['g', 367, 376],
    ['r', 291, 377], ['r', 258, 267, 222, 300], ['g', 257, 268, 222, 279], ['g', 264, 294], ['r', 270, 286, 230],
    ['g', 273, 292, 265, 297], ['g', 288, 313, 280, 330], ['r', 313, 314, 309, 320], ['r', 265, 313, 215, 317], ['r', 220, 276, 183],
    ['g', 209, 225, 198, 235], ['r', 250, 282, 228, 305], ['r', 236, 241, 200, 280], ['r', 232, 240, 222, 262], ['r', 218, 237, 193, 250],
    ['g', 218, 251, 213], ['g', 244, 262, 237], ['g', 259, 273, 250], ['g', 269, 290], ['r', 286, 287, 270, 294],
    ['g', 284, 294, 280], ['g', 293, 306], ['g', 307, 310, 304, 321], ['r', 294, 311, 280], ['g', 276, 288, 265],
    ['r', 289, 292, 282], ['r', 280, 291, 272], ['g', 284, 300, 280], ['r', 277, 302, 260], ['r', 280, 285, 272, 292],
    ['g', 279, 289], ['r', 288, 294], ['g', 290, 299], ['g', 301, 308]
];

const volumes = 'r509 g510 g509 g508 r510 r508 r506 r505 r504 g506 g506 r503 g503 r503 g505 r504 r492 g497 g501 r505 g507 g507 r507 r507 g499 r452 r435 g460 g477 r466 g483 g489 g500 r467 r460 g474 g459 r457 r477 r468 g484 g495 g495 g500 r503 g502 g498 g503 r499 r499 g505 r500 g503 r486 g501 g504 r507 g505 g505'.split(' ');

const barX = i => 49 + i * 16.53;

function bar(type, i, top, bottom) {
    const cls = type === 'g' ? 'down-bar' : 'up-bar';
    return `<rect class="${cls}" x="${barX(i) - 5}" y="${top}" width="11" height="${bottom - top}"/>`;
}

document.getElementById('candles').innerHTML = candles.map(([type, top, bottom, high = top, low = bottom], i) =>
    `<path class="wick" d="M${barX(i)} ${high}V${low}"/>` + bar(type, i, top, bottom)
).join('');

document.getElementById('volumes').innerHTML = volumes.map((v, i) =>
    bar(v[0], i, Number(v.slice(1)), 515)
).join('');
```
